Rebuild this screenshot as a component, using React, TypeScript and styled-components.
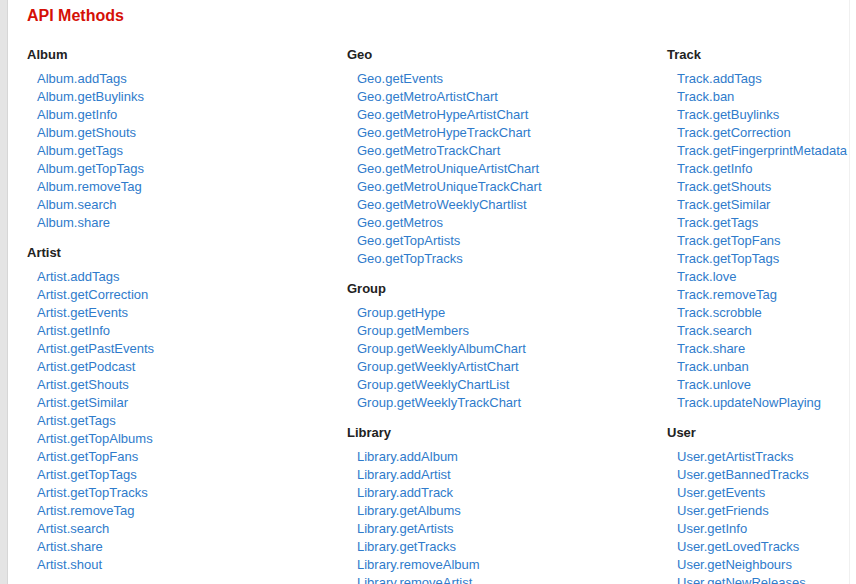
import React from "react";
import styled, { createGlobalStyle } from "styled-components";

type Group = { name: string; methods: string[] };

const columns: Group[][] = [
  [
    {
      name: "Album",
      methods: ["addTags", "getBuylinks", "getInfo", "getShouts", "getTags", "getTopTags", "removeTag", "search", "share"],
    },
    {
      name: "Artist",
      methods: [
        "addTags", "getCorrection", "getEvents", "getInfo", "getPastEvents", "getPodcast", "getShouts",
        "getSimilar", "getTags", "getTopAlbums", "getTopFans", "getTopTags", "getTopTracks", "removeTag",
        "search", "share", "shout",
      ],
    },
  ],
  [
    {
      name: "Geo",
      methods: [
        "getEvents", "getMetroArtistChart", "getMetroHypeArtistChart", "getMetroHypeTrackChart",
        "getMetroTrackChart", "getMetroUniqueArtistChart", "getMetroUniqueTrackChart",
        "getMetroWeeklyChartlist", "getMetros", "getTopArtists", "getTopTracks",
      ],
    },
    {
      name: "Group",
      methods: ["getHype", "getMembers", "getWeeklyAlbumChart", "getWeeklyArtistChart", "getWeeklyChartList", "getWeeklyTrackChart"],
    },
    {
      name: "Library",
      methods: ["addAlbum", "addArtist", "addTrack", "getAlbums", "getArtists", "getTracks", "removeAlbum", "removeArtist", "removeScrobble", "removeTrack"],
    },
  ],
  [
    {
      name: "Track",
      methods: [
        "addTags", "ban", "getBuylinks", "getCorrection", "getFingerprintMetadata", "getInfo", "getShouts",
        "getSimilar", "getTags", "getTopFans", "getTopTags", "love", "removeTag", "scrobble", "search",
        "share", "unban", "unlove", "updateNowPlaying",
      ],
    },
    {
      name: "User",
      methods: [
        "getArtistTracks", "getBannedTracks", "getEvents", "getFriends", "getInfo", "getLovedTracks",
        "getNeighbours", "getNewReleases", "getPastEvents", "getPersonalTags", "getPlaylists",
      ],
    },
  ],
];

const GlobalStyle = createGlobalStyle`
  html, body {
    margin: 0;
    padding: 0;
    overflow: hidden;
    background: #fff;
  }
  body {
    font-family: "Liberation Sans", Arial, sans-serif;
  }
`;

const App = () => (
  <>
    <GlobalStyle />
    <PageStyled>
      <SideBarStyled />
      <ContentStyled>
        <TitleStyled>API Methods</TitleStyled>
        <ColumnsStyled>
          {columns.map((groups, i) => (
            <ColumnStyled key={i}>
              {groups.map((group) => (
                <SectionStyled key={group.name}>
                  <HeadingStyled>{group.name}</HeadingStyled>
                  <ListStyled>
                    {group.methods.map((m) => (
                      <li key={m}>
                        <LinkStyled href="#">
                          {group.name}.{m}
                        </LinkStyled>
                      </li>
                    ))}
                  </ListStyled>
                </SectionStyled>
              ))}
            </ColumnStyled>
          ))}
        </ColumnsStyled>
      </ContentStyled>
    </PageStyled>
  </>
);

export default App;

const PageStyled = styled.div`
  display: flex;
  height: 584px;
  overflow: hidden;
`;

const SideBarStyled = styled.div`
  width: 7px;
  flex-shrink: 0;
  background: #e4e4e4;
  border-right: 1px solid #d6d6d6;
`;

const ContentStyled = styled.div`
  width: 822px;
  padding: 6px 0 0 19px;
  border-right: 1px solid #f0f0f0;
`;

const TitleStyled = styled.h1`
  margin: 0 0 20px;
  font-size: 16px;
  line-height: 20px;
  font-weight: 700;
  color: #d51007;
`;

const ColumnsStyled = styled.div`
  display: grid;
  grid-template-columns: 320px 320px 320px;
`;

const ColumnStyled = styled.div`
  display: flex;
  flex-direction: column;
`;

const SectionStyled = styled.section`
  margin-bottom: 12px;
`;

const HeadingStyled = styled.h3`
  margin: 0 0 6px;
  font-size: 13px;
  line-height: 18px;
  font-weight: 700;
  color: #222;
`;

const ListStyled = styled.ul`
  list-style: none;
  margin: 0;
  padding: 0 0 0 10px;

  li {
    font-size: 13px;
    line-height: 18px;
    white-space: nowrap;
  }
`;

const LinkStyled = styled.a`
  color: #2f7bcb;
  text-decoration: none;
`;
